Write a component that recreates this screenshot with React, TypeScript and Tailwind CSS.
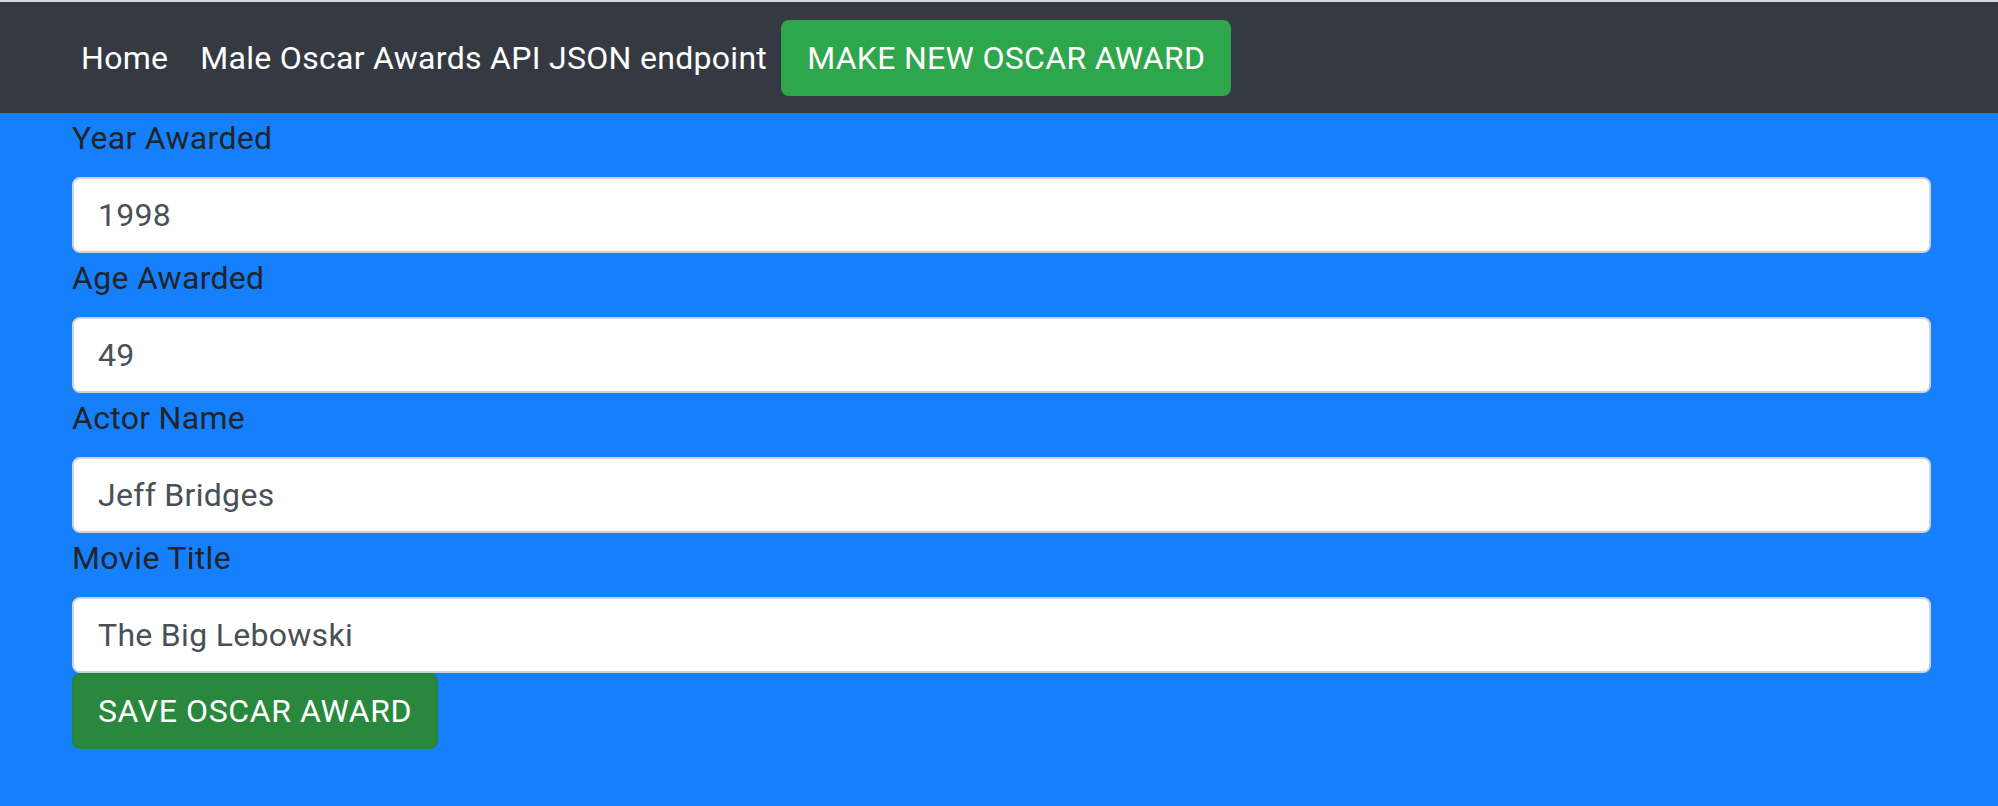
const fields = [
  { label: "Year Awarded", value: "1998" },
  { label: "Age Awarded", value: "49" },
  { label: "Actor Name", value: "Jeff Bridges" },
  { label: "Movie Title", value: "The Big Lebowski" },
];

function Navbar() {
  return (
    <nav className="flex h-[111px] items-center bg-[#353a42] pl-[65px]">
      <a href="#" className="px-4 py-4 text-[32px] leading-[48px] text-white">
        Home
      </a>
      <a href="#" className="py-4 pl-4 pr-[14px] text-[32px] leading-[48px] text-white">
        Male Oscar Awards API JSON endpoint
      </a>
      <button className="rounded-[8px] border-2 border-[#2ea64c] bg-[#2ea64c] px-[24px] py-[12px] text-[32px] leading-[48px] text-white">
        MAKE NEW OSCAR AWARD
      </button>
    </nav>
  );
}

export default function App() {
  return (
    <div className="min-h-screen bg-[#167ffc] font-['Roboto',sans-serif] tracking-[0.3px]">
      <div className="h-[2px] bg-[#d8d9dc]" />
      <Navbar />
      <form className="pl-[72px] pr-[67px]">
        {fields.map((f) => (
          <div key={f.label}>
            <label className="mb-4 block pt-[2px] text-[32px] leading-[46px] text-[#212529]">
              {f.label}
            </label>
            <input
              type="text"
              defaultValue={f.value}
              className="block h-[76px] w-full rounded-[8px] border-2 border-[#ced4da] bg-white px-[24px] text-[32px] tracking-[0.3px] text-[#495057] outline-none"
            />
          </div>
        ))}
        <button
          type="button"
          className="rounded-[8px] border-2 border-[#27833b] bg-[#29873e] px-[24px] py-[12px] text-[32px] leading-[48px] tracking-[0.6px] text-white"
        >
          SAVE OSCAR AWARD
        </button>
      </form>
    </div>
  );
}
